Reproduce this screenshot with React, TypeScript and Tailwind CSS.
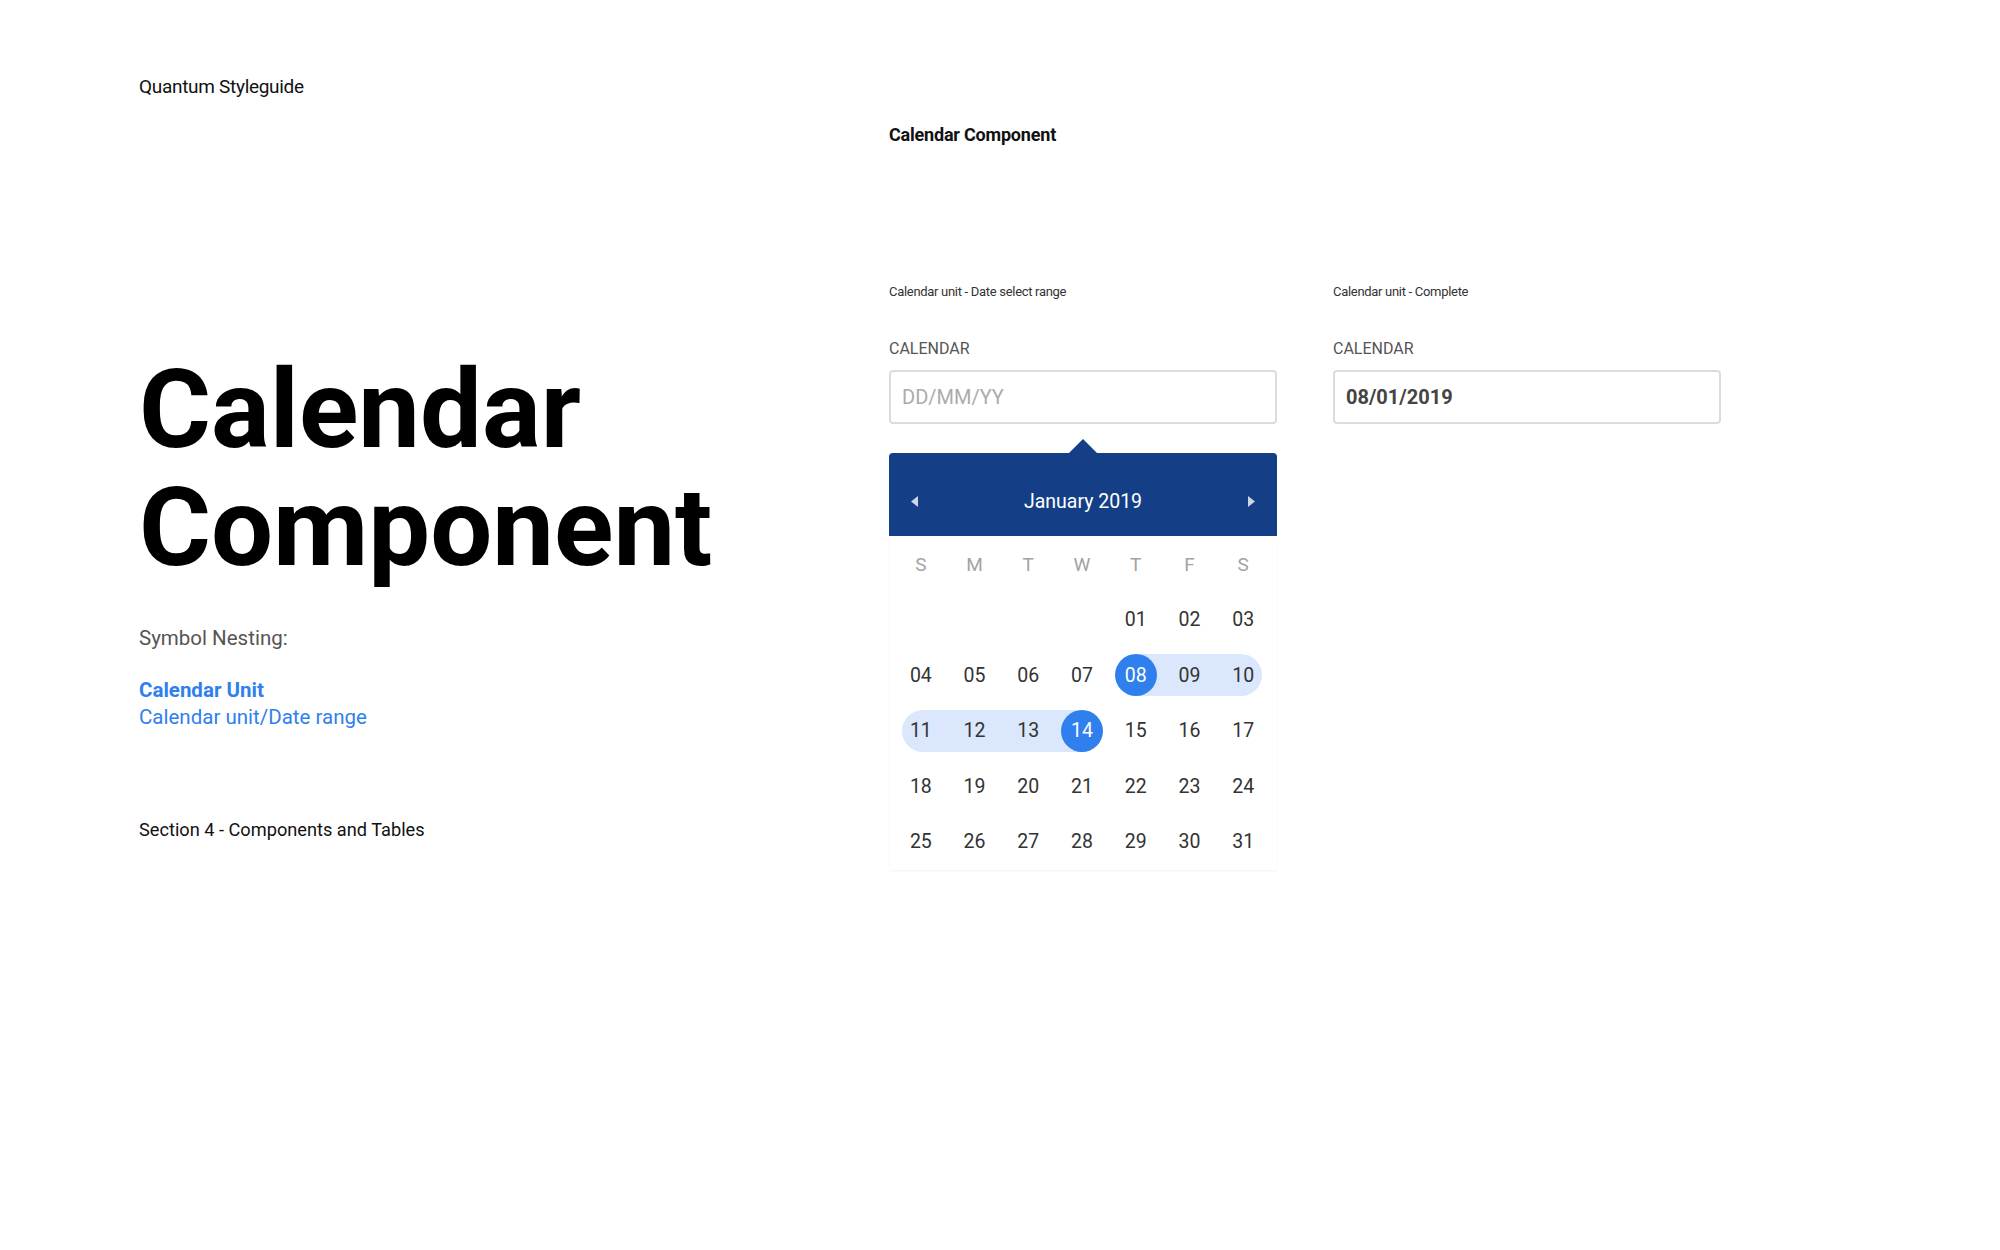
import React from "react";

const days: (number | null)[] = [
  null, null, null, null,
  ...Array.from({ length: 31 }, (_, i) => i + 1),
];

const rows: (number | null)[][] = [];
for (let i = 0; i < days.length; i += 7) rows.push(days.slice(i, i + 7));

const RANGE_START = 8;
const RANGE_END = 14;

function DayCell({ day, col }: { day: number | null; col: number }) {
  if (!day) return <div />;
  const label = String(day).padStart(2, "0");
  const isStart = day === RANGE_START;
  const isEnd = day === RANGE_END;
  const inRange = day >= RANGE_START && day <= RANGE_END;

  let strip: string | null = null;
  if (inRange) {
    if (isStart) strip = "left-1/2 right-0";
    else if (isEnd) strip = "left-0 right-1/2";
    else if (col === 0) strip = "left-[8px] right-0 rounded-l-full";
    else if (col === 6) strip = "left-0 right-[8px] rounded-r-full";
    else strip = "left-0 right-0";
  }

  return (
    <div className="relative flex items-center justify-center">
      {strip && (
        <div className={`absolute top-1/2 -translate-y-1/2 h-[42px] bg-[#dae7fc] ${strip}`} />
      )}
      {(isStart || isEnd) && (
        <div className="absolute top-1/2 left-1/2 -translate-x-1/2 -translate-y-1/2 w-[42px] h-[42px] rounded-full bg-[#2f80ed]" />
      )}
      <span
        className={`relative text-[19.5px] leading-none ${
          isStart || isEnd ? "text-white" : "text-[#333]"
        }`}
      >
        {label}
      </span>
    </div>
  );
}

function Arrow({ dir }: { dir: "left" | "right" }) {
  return (
    <svg width="7" height="11" viewBox="0 0 7 11">
      {dir === "left" ? (
        <polygon points="7,0 7,11 0,5.5" fill="#cfd6e3" />
      ) : (
        <polygon points="0,0 0,11 7,5.5" fill="#cfd6e3" />
      )}
    </svg>
  );
}

function Calendar() {
  return (
    <div className="flex flex-col">
      {/* caret */}
      <div className="mt-[15px] flex justify-center h-[14px]">
        <svg width="28" height="14" viewBox="0 0 28 14">
          <polygon points="0,14 14,0 28,14" fill="#143f87" />
        </svg>
      </div>

      <div className="h-[83px] bg-[#143f87] rounded-t-[4px] flex items-center justify-between px-[22px] pt-[14px]">
        <Arrow dir="left" />
        <span className="text-white text-[19.5px] leading-none">January 2019</span>
        <Arrow dir="right" />
      </div>

      <div className="bg-white pl-[5px] pr-[7px] shadow-[0_1px_2px_rgba(0,0,0,0.05)]">
        <div className="grid grid-cols-7 h-14">
          {["S", "M", "T", "W", "T", "F", "S"].map((d, i) => (
            <div key={i} className="flex items-center justify-center text-[19px] leading-none text-[#a3a3a3]">
              {d}
            </div>
          ))}
        </div>
        {rows.map((row, r) => (
          <div key={r} className="grid grid-cols-7 h-[55.5px]">
            {Array.from({ length: 7 }, (_, c) => (
              <DayCell key={c} day={row[c] ?? null} col={c} />
            ))}
          </div>
        ))}
      </div>
    </div>
  );
}

function Field({ value, placeholder }: { value?: string; placeholder?: string }) {
  return (
    <div className="h-[54px] border-2 border-[#dcdcdc] rounded-[4px] flex items-center pl-[11px] bg-white">
      {value ? (
        <span className="text-[20px] leading-none font-bold text-[#444]">{value}</span>
      ) : (
        <span className="text-[20px] leading-none text-[#ababab]">{placeholder}</span>
      )}
    </div>
  );
}

function Unit({ title, children }: { title: string; children: React.ReactNode }) {
  return (
    <div className="w-[388px] flex flex-col">
      <p className="text-[13px] leading-none tracking-[-0.3px] text-[#333]">{title}</p>
      <p className="mt-[43px] text-[16px] leading-none text-[#555]">CALENDAR</p>
      <div className="mt-[13px]">{children}</div>
    </div>
  );
}

export default function App() {
  return (
    <div className="min-h-[1250px] w-[2000px] bg-white font-['Roboto',sans-serif] flex pl-[139px]">
      {/* left column */}
      <div className="w-[750px] flex flex-col pt-[77px]">
        <p className="text-[19px] leading-none tracking-[-0.3px] text-[#111]">Quantum Styleguide</p>
        <h1 className="mt-[255px] text-[110px] leading-[118px] font-bold text-black">
          Calendar
          <br />
          Component
        </h1>
        <p className="mt-[41px] text-[20.5px] leading-none text-[#555]">Symbol Nesting:</p>
        <div className="mt-[28px] text-[20.5px] leading-[27px] text-[#2f80ed]">
          <p className="font-bold">Calendar Unit</p>
          <p>Calendar unit/Date range</p>
        </div>
        <p className="mt-[90px] text-[18.2px] leading-none text-[#111]">
          Section 4 - Components and Tables
        </p>
      </div>

      {/* right column */}
      <div className="flex-1 flex flex-col pt-[126px]">
        <p className="text-[18px] leading-none font-bold tracking-[-0.2px] text-[#111]">
          Calendar Component
        </p>
        <div className="mt-[141px] flex gap-[56px] items-start">
          <Unit title="Calendar unit - Date select range">
            <Field placeholder="DD/MM/YY" />
            <Calendar />
          </Unit>
          <Unit title="Calendar unit - Complete">
            <Field value="08/01/2019" />
          </Unit>
        </div>
      </div>
    </div>
  );
}
